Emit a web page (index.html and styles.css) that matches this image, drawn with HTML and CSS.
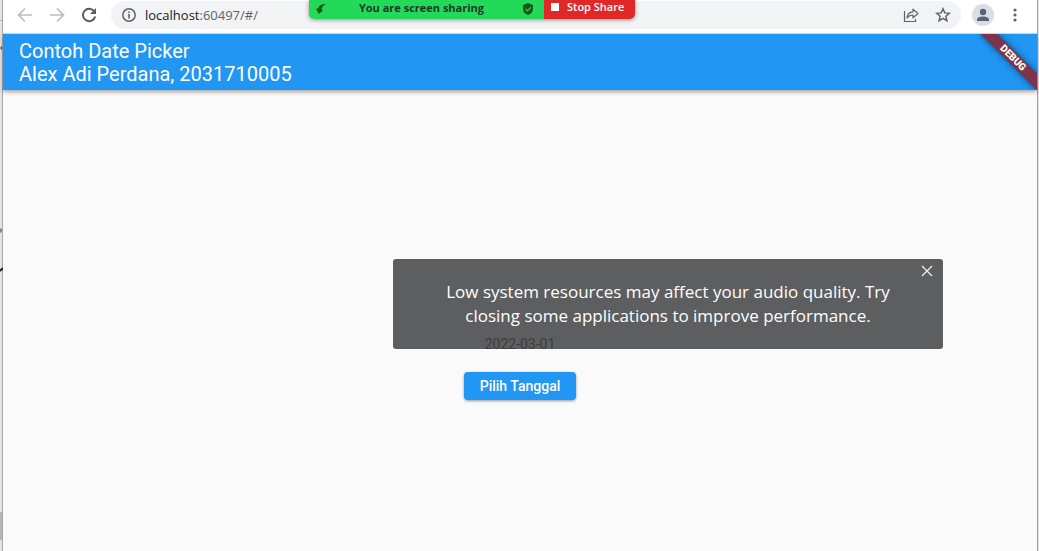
FILE: index.html
```html
<!DOCTYPE html>
<html lang="id">
<head>
<meta charset="utf-8">
<meta name="viewport" content="width=device-width, initial-scale=1">
<title>Contoh Date Picker</title>
<link rel="stylesheet" href="styles.css">
</head>
<body>
<div class="desktop">
  <div class="edge edge-left">
    <svg class="edge-marks" width="3" height="551" viewBox="0 0 3 551" aria-hidden="true">
      <path d="M0 20.500H2" stroke="#b5b5b5"/>
      <path d="M0 48l2-2v4z" fill="#555"/>
      <path d="M0 228l2 1v3l-2 1z" fill="#888"/>
      <path d="M0 271l3-3" stroke="#222" stroke-width="2"/>
      <path d="M0 512h2v28H0z" fill="#b4b4b4"/>
    </svg>
  </div>
  <main class="window">
    <header class="toolbar">
      <button class="tool back" aria-label="Back"><svg width="16" height="16" viewBox="0 0 16 16"><path d="M15 8H2M8 1.500L1.500 8 8 14.500" fill="none" stroke="#bcbdbf" stroke-width="1.700"/></svg></button>
      <button class="tool forward" aria-label="Forward"><svg width="16" height="16" viewBox="0 0 16 16"><path d="M1 8h13M8 1.500L14.500 8 8 14.500" fill="none" stroke="#bcbdbf" stroke-width="1.700"/></svg></button>
      <button class="tool reload" aria-label="Reload"><svg width="16" height="16" viewBox="0 0 16 16"><path d="M13.300 4.500A6.200 6.200 0 1 0 14.200 9.500" fill="none" stroke="#5a5d61" stroke-width="2"/><path d="M15 1v6H9z" fill="#5a5d61"/></svg></button>
      <div class="omnibox">
        <button class="tool info" aria-label="Site information"><svg width="14" height="14" viewBox="0 0 14 14"><circle cx="7" cy="7" r="6.200" fill="none" stroke="#5f6368" stroke-width="1.500"/><path d="M7 6v4.500M7 3.400v1.600" stroke="#5f6368" stroke-width="1.600"/></svg></button>
        <span class="address"><span class="host">localhost</span>:60497/#/</span>
        <button class="tool share" aria-label="Share"><svg width="16" height="16" viewBox="0 0 16 16" fill="none" stroke="#5f6368" stroke-width="1.200"><path d="M1.500 4v10.500h11V12"/><path d="M4 11c.4-4 2.500-6 6-6.200V2.200L15 6.500l-5 4.300V8C7.300 8 5.500 9 4 11z" stroke-linejoin="round"/></svg></button>
        <button class="tool" aria-label="Bookmark"><svg width="16" height="16" viewBox="0 0 16 16"><path d="M8 1.800l1.800 4.100 4.500.4-3.400 3 1 4.400L8 11.400l-3.900 2.300 1-4.400-3.400-3 4.500-.4z" fill="none" stroke="#5f6368" stroke-width="1.500"/></svg></button>
      </div>
      <button class="tool avatar" aria-label="Profile"><svg width="14" height="14" viewBox="0 0 14 14" fill="#5a6478"><circle cx="7" cy="4" r="3.200"/><path d="M1 13v-1.500C1 9.500 4 8.400 7 8.400s6 1.100 6 3.100V13z"/></svg></button>
      <button class="tool menu" aria-label="Menu"><svg width="4" height="14" viewBox="0 0 4 14" fill="#5f6368"><circle cx="2" cy="2" r="1.600"/><circle cx="2" cy="7" r="1.600"/><circle cx="2" cy="12" r="1.600"/></svg></button>
    </header>
    <section class="app">
      <header class="appbar">
        <h1 class="title">Contoh Date Picker<br>Alex Adi Perdana, 2031710005</h1>
        <div class="banner"><span class="ribbon">DEBUG</span></div>
      </header>
      <div class="content">
        <time class="date" datetime="2022-03-01">2022-03-01</time>
        <button class="pick">Pilih Tanggal</button>
      </div>
    </section>
  </main>
  <div class="edge edge-right"></div>

  <div class="sharing">
    <div class="status">
      <svg width="10" height="12" viewBox="0 0 10 12" aria-hidden="true"><path d="M10 1C5 1 2.400 2.800 2.300 5.500H0l2.800 5.500L7 7.500 5.600 6.300C5.800 4 7.500 2.200 10 1z" fill="#0b5a12"/></svg>
      <span class="status-text">You are screen sharing</span>
      <svg width="10" height="12" viewBox="0 0 10 12" aria-hidden="true"><path d="M5 0l5 2v4c0 2.800-2 5-5 6-3-1-5-3.200-5-6V2z" fill="#16571b"/><path d="M2.500 6l2 2L8 4.300" fill="none" stroke="#23d959" stroke-width="1.200"/></svg>
    </div>
    <button class="stop"><span class="square"></span>Stop Share</button>
  </div>

  <div class="toast" role="alert">
    <p class="message">Low system resources may affect your audio quality. Try<br>closing some applications to improve performance.</p>
    <button class="close" aria-label="Close"><svg width="12" height="12" viewBox="0 0 12 12"><path d="M1 1l10 10M11 1L1 11" stroke="#eee" stroke-width="1.300"/></svg></button>
  </div>
</div>
</body>
</html>
```
FILE: styles.css
```css
* {
  box-sizing: border-box;
}

body {
  margin: 0;
  font-family: Roboto, sans-serif;
}

button {
  border: 0;
  padding: 0;
  background: none;
  font: inherit;
  color: inherit;
}

svg {
  display: block;
}

.desktop {
  position: relative;
  display: flex;
  min-height: 100vh;
  overflow: hidden;
}

.edge {
  background: #e4e4e4;
}

.edge-left {
  position: relative;
  width: 3px;
  border-right: 1px solid #a8a8a8;
}

.edge-marks {
  position: absolute;
  top: 0;
  left: 0;
}

.edge-right {
  width: 2px;
  border-left: 1px solid #a0a0a0;
}

.window {
  flex: 1;
  display: flex;
  flex-direction: column;
  background: #fafafa;
}

.toolbar {
  display: flex;
  align-items: center;
  height: 34px;
  padding: 0 20px 4px 14px;
  background: #fff;
  border-bottom: 1px solid #dadce0;
}

.tool {
  display: flex;
  align-items: center;
  justify-content: center;
}

.forward,
.reload {
  margin-left: 16px;
}

.omnibox {
  flex: 1;
  display: flex;
  align-items: center;
  height: 28px;
  margin-left: 14px;
  padding: 0 10px 0 11px;
  border-radius: 14px;
  background: #f1f3f4;
}

.address {
  flex: 1;
  margin-left: 9px;
  font: 13px/20px "Open Sans", sans-serif;
  color: #5f6368;
}

.host {
  color: #202124;
}

.share {
  margin-right: 16px;
}

.avatar {
  width: 22px;
  height: 22px;
  margin-left: 11px;
  border-radius: 50%;
  background: #dadde3;
}

.menu {
  margin-left: 19px;
}

.app {
  flex: 1;
  display: flex;
  flex-direction: column;
}

.appbar {
  position: relative;
  padding: 6px 16px 4px;
  background: #2196f3;
  color: #fff;
  box-shadow: 0 2px 4px rgba(0, 0, 0, 0.35);
}

.title {
  margin: 0;
  font-size: 20px;
  line-height: 23px;
  font-weight: 400;
}

.banner {
  position: absolute;
  top: 0;
  right: 0;
  width: 80px;
  height: 100%;
  overflow: hidden;
}

.ribbon {
  position: absolute;
  top: 18px;
  right: -16px;
  width: 80px;
  background: #7e344c;
  box-shadow: 0 0 6px rgba(0, 0, 0, 0.5);
  font-size: 10px;
  line-height: 12px;
  font-weight: 900;
  text-align: center;
  transform: rotate(45deg);
}

.content {
  flex: 1;
  display: flex;
  flex-direction: column;
  align-items: center;
  justify-content: center;
  gap: 20px;
  padding-top: 94px;
}

.date {
  font-size: 14px;
  line-height: 16px;
  color: #111;
}

.pick {
  height: 28px;
  padding: 0 16px;
  border-radius: 4px;
  background: #2196f3;
  box-shadow: 0 1px 3px rgba(0, 0, 0, 0.4);
  color: #fff;
  font-size: 14px;
  font-weight: 500;
}

.sharing {
  position: absolute;
  top: 0;
  left: 309px;
  display: flex;
  width: 326px;
  height: 19px;
  overflow: hidden;
  border-radius: 0 0 5px 5px;
  box-shadow: 0 1px 4px rgba(0, 0, 0, 0.4);
  font: 11px/16px "Open Sans", sans-serif;
}

.status {
  flex: 1;
  display: flex;
  align-items: center;
  padding: 0 11px 2px 7px;
  background: #23d959;
  color: #1c3829;
  font-weight: 700;
}

.status-text {
  flex: 1;
  padding: 0 6px 2px 0;
  text-align: center;
}

.stop {
  display: flex;
  align-items: center;
  gap: 8px;
  width: 91px;
  padding: 0 0 5px 7px;
  background: #e02828;
  color: #fff;
  font-weight: 600;
}

.square {
  width: 8px;
  height: 8px;
  background: #fff;
}

.toast {
  position: absolute;
  top: 259px;
  left: 393px;
  width: 550px;
  padding: 21px 0;
  border-radius: 3px;
  background: rgba(66, 67, 69, 0.86);
  color: #fff;
}

.message {
  margin: 0;
  font: 400 17px/24px "Open Sans", sans-serif;
  text-align: center;
  white-space: nowrap;
}

.close {
  position: absolute;
  top: 6px;
  right: 10px;
}
```
